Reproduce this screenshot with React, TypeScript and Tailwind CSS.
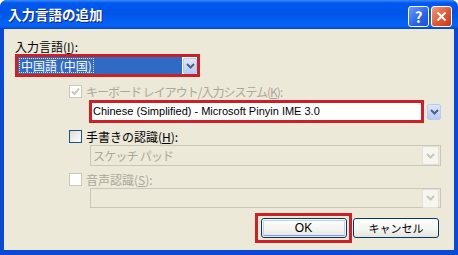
import React from "react";

function Chevron({ color }: { color: string }) {
  return (
    <svg width="9" height="6" viewBox="0 0 9 6">
      <path d="M1 1l3.5 3.5L8 1" fill="none" stroke={color} strokeWidth="2" />
    </svg>
  );
}

function DropButton({ disabled }: { disabled?: boolean }) {
  if (disabled) {
    return (
      <div className="flex h-[19px] w-[17px] items-center justify-center rounded-[2px] border border-[#e3e1d7] bg-[#f6f5f0]">
        <Chevron color="#c9c7ba" />
      </div>
    );
  }
  return (
    <div className="flex h-[16px] w-[14px] items-center justify-center rounded-[2px] border border-[#b7caf5] bg-[linear-gradient(#dde6fd,#b6cbf7)]">
      <Chevron color="#4d6185" />
    </div>
  );
}

function CheckBox({ checked, disabled }: { checked?: boolean; disabled?: boolean }) {
  return (
    <div
      className={
        disabled
          ? "flex size-[13px] shrink-0 items-center justify-center border border-[#cac8bb] bg-white"
          : "flex size-[13px] shrink-0 items-center justify-center border border-[#1c5180] bg-[linear-gradient(135deg,#dcdcd7,#ffffff)]"
      }
    >
      {checked ? (
        <svg width="9" height="9" viewBox="0 0 9 9">
          <path d="M1 4.5l2.5 2.5L8 1.5" fill="none" stroke="#c9c7ba" strokeWidth="2" />
        </svg>
      ) : null}
    </div>
  );
}

function XpButton({ label, isDefault }: { label: string; isDefault?: boolean }) {
  return (
    <div className="flex h-[20px] w-[86px] items-center justify-center rounded-[3px] border border-[#003c74] bg-[linear-gradient(#ffffff,#f3f3ef_60%,#e5e3da)] p-px">
      <div
        className={
          isDefault
            ? "flex h-full w-full items-center justify-center rounded-[2px] border border-[#bdd0f5] border-b-[#7f9df0] font-['Liberation_Sans',sans-serif] text-[12px] leading-none text-black"
            : "flex h-full w-full items-center justify-center text-[11px] leading-none text-black"
        }
      >
        {label}
      </div>
    </div>
  );
}

export default function App() {
  return (
    <div className="h-[255px] w-[458px] bg-white font-['Noto_Sans_CJK_JP',sans-serif]">
      <div className="flex h-full flex-col overflow-hidden rounded-t-[7px] bg-[#0a48d6]">
        {/* title bar */}
        <div className="flex h-[29px] shrink-0 items-center justify-between bg-[linear-gradient(180deg,#3a8cff,#0058ee_10%,#0054e8_45%,#0464f5_85%,#0a5cf0_93%,#0040d0)] pl-[8px] pr-[6px] pt-[1px]">
          <span className="text-[13.5px] font-bold leading-none text-white [text-shadow:1px_1px_0_#0a1f8a]">
            入力言語の追加
          </span>
          <div className="flex gap-[2px] pt-[3px]">
            <div className="flex size-[21px] items-center justify-center rounded-[3px] border border-white bg-[linear-gradient(135deg,#6b9bff,#2a63e8_60%,#1d50d2)] text-[15px] font-bold leading-none text-white">
              ?
            </div>
            <div className="flex size-[21px] items-center justify-center rounded-[3px] border border-white bg-[linear-gradient(135deg,#f0a07e,#e2552f_55%,#c73a18)]">
              <svg width="11" height="11" viewBox="0 0 11 11">
                <path d="M1.5 1.5l8 8M9.5 1.5l-8 8" stroke="white" strokeWidth="2.2" />
              </svg>
            </div>
          </div>
        </div>

        {/* body */}
        <div className="mx-[4px] mb-[5px] flex flex-1 flex-col bg-[#ece9d8] pl-[11px] text-[12px]">
          <div className="mt-[11px] h-[13px] leading-[13px] text-black">
            入力言語(<span className="underline">I</span>):
          </div>

          <div className="mt-[1px] flex h-[23px] w-[185px] border-[3px] border-[#cc1f26] bg-white">
            <div className="flex flex-1 items-center bg-[#316ac5] pl-[1px]">
              <span className="border border-dotted border-[#f2e9a0] px-px text-[12px] leading-[13px] text-white">
                中国語 (中国)
              </span>
            </div>
            <div className="ml-px flex items-center">
              <DropButton />
            </div>
          </div>

          <div className="ml-[54px] mt-[8px] flex h-[13px] items-center gap-[4px]">
            <CheckBox checked disabled />
            <span className="leading-[13px] tracking-[-1px] text-[#aca899]">
              キーボード レイアウト/入力システム(<span className="underline">K</span>):
            </span>
          </div>

          <div className="ml-[74px] mt-[2px] flex h-[23px] items-center">
            <div className="flex h-[23px] w-[335px] items-center border-[3px] border-[#cc1f26] bg-white pl-[1px] font-['Liberation_Sans',sans-serif] text-[11px] text-black">
              Chinese (Simplified) - Microsoft Pinyin IME 3.0
            </div>
            <div className="ml-[3px]">
              <DropButton />
            </div>
          </div>

          <div className="ml-[54px] mt-[7px] flex h-[13px] items-center gap-[4px]">
            <CheckBox />
            <span className="leading-[13px] text-black">
              手書きの認識(<span className="underline">H</span>):
            </span>
          </div>

          <div className="ml-[75px] mt-[2px] flex h-[21px] w-[351px] items-center justify-between border border-[#c9c7ba] pl-[2px] pr-px">
            <span className="leading-[13px] tracking-[-0.8px] text-[#aca899]">スケッチ パッド</span>
            <DropButton disabled />
          </div>

          <div className="ml-[54px] mt-[7px] flex h-[13px] items-center gap-[4px]">
            <CheckBox disabled />
            <span className="leading-[13px] text-[#aca899]">
              音声認識(<span className="underline">S</span>):
            </span>
          </div>

          <div className="ml-[75px] mt-[2px] flex h-[20px] w-[351px] items-center justify-end border border-[#c9c7ba] pr-px">
            <DropButton disabled />
          </div>

          <div className="mt-[5px] flex items-center justify-end pr-[15px]">
            <div className="flex h-[30px] w-[97px] items-center justify-center border-[3px] border-[#cc1f26]">
              <XpButton label="OK" isDefault />
            </div>
            <div className="ml-px">
              <XpButton label="キャンセル" />
            </div>
          </div>
        </div>
      </div>
    </div>
  );
}
